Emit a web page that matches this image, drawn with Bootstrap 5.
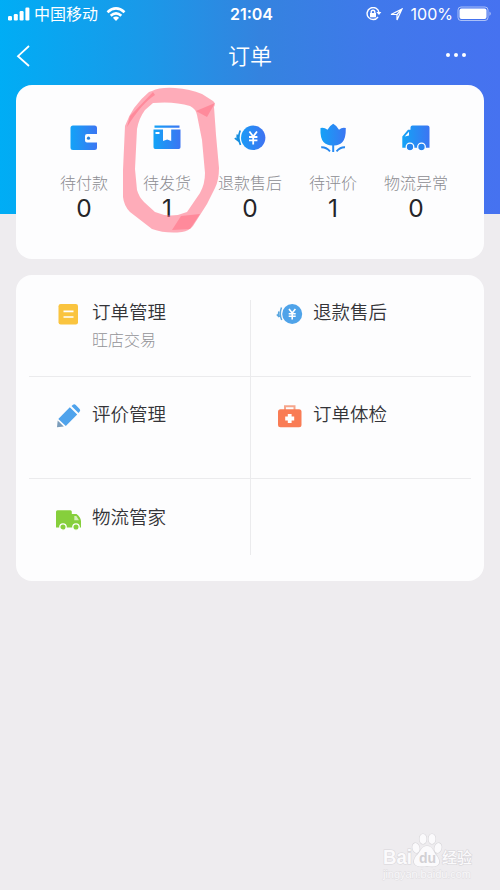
<!DOCTYPE html>
<html lang="zh-CN">
<head>
<meta charset="utf-8">
<meta name="viewport" content="width=device-width, initial-scale=1">
<title>订单</title>
<link rel="stylesheet" href="https://cdn.jsdelivr.net/npm/bootstrap@5.3.0/dist/css/bootstrap.min.css">
<style>
body{font-family:"Noto Sans CJK SC",sans-serif;background:#eeecef;height:890px;overflow:hidden;color:#343438}
.hero{height:214px;background:linear-gradient(90deg,#00adf5 0%,#1b98e8 30%,#3483df 52%,#4078eb 76%,#4672f0 100%);margin-bottom:-129px}
.status{height:28px;font-family:"Inter","Noto Sans CJK SC",sans-serif;font-size:16px;line-height:28px}
.status>*,.titlebar>*{flex:0 0 33.3333%}
.clock{font-weight:600;font-size:16px;padding-left:3px}
.carrier{font-size:16px;line-height:28px}
.titlebar{height:57px}
.titlebar h1{font-size:22px;line-height:52px;height:57px;font-weight:350}
.panel{margin:0 16px;border-radius:16px;background:#fdfdfe}
.summary{height:174px;padding:37px 26.5px 0}
.summary .tile{width:20%}
.summary svg{width:32px;height:32px}
.tile-label{font-size:16px;line-height:22px;margin-top:17px;color:#8c8c91;font-weight:300;white-space:nowrap}
.tile-count{font-family:"Inter",sans-serif;font-size:24.5px;line-height:31px;color:#252528}
.marker{left:0;top:0;width:500px;height:270px;pointer-events:none}
.menu{margin-top:16px;height:306px;padding:25px 13px}
.entry{height:101px;padding:25px 0 0 26px}
.menu>.row:first-child .entry{height:76px;padding-top:0}
.menu>.row:last-child .entry{height:76px;padding-top:26px}
.menu .row{border-color:#ebebed!important}
.entry:last-child{border-left:1px solid #ebebed}
.entry svg{width:28px;height:28px;flex:none;margin-right:9px}
.entry:last-child svg{margin-left:-2px;margin-right:10px}
.entry-title{font-size:18.5px;line-height:26px;font-weight:350;margin-top:-2px}
.entry-note{font-size:16px;line-height:24px;color:#939397;font-weight:300;margin-top:3px}
.brand{right:24px;bottom:6px;width:96px;height:52px}
</style>
<script src="https://cdn.jsdelivr.net/npm/bootstrap@5.3.0/dist/js/bootstrap.bundle.min.js"></script>
</head>
<body class="position-relative">
<header class="hero text-white">
  <div class="status d-flex">
    <div class="d-flex align-items-center ps-2">
      <svg width="22" height="14" viewBox="0 0 22 14" fill="#fff"><rect y="9" width="4" height="4.5" rx="1.2"/><rect x="5.8" y="7" width="4" height="6.500" rx="1.2"/><rect x="11.600" y="4" width="4" height="9.500" rx="1.2"/><rect x="17.400" y="0.500" width="4" height="13" rx="1.2"/></svg>
      <span class="carrier ms-1">中国移动</span>
      <svg class="ms-2" width="20" height="15" viewBox="0 0 20 15" fill="none" stroke="#fff" stroke-width="2.700"><path d="M1.500 5.200Q10-2.300 18.500 5.200M4.700 8.700Q10 4.200 15.300 8.700"/><path d="M6.900 10.800Q10 8.200 13.100 10.800L10 14Z" fill="#fff" stroke="none"/></svg>
    </div>
    <div class="clock text-center">21:04</div>
    <div class="d-flex align-items-center justify-content-end pe-2">
      <svg width="16" height="14" viewBox="0 0 16 14" fill="none" stroke="#fff" stroke-width="1.400"><path d="M12 10A6 6 0 1 1 13 5.500"/><path d="M10.300 5h5L13 8Z" fill="#fff" stroke="none"/><rect x="4" y="6" width="6" height="4.300" fill="#fff" stroke="none"/><path d="M5.200 6V5a1.800 1.800 0 0 1 3.600 0v1"/></svg>
      <svg class="ms-2" width="13" height="13" viewBox="0 0 13 13" fill="none" stroke="#fff" stroke-width="1.200"><path d="M1 6.500 12 1 7 12V6.500ZM7 6.500 12 1"/></svg>
      <span class="ms-2">100%</span>
      <svg class="ms-1" width="35" height="16" viewBox="0 0 35 16"><rect x="1" y="1" width="30" height="13.500" rx="3" fill="none" stroke="#fff" stroke-opacity=".55"/><rect x="2.500" y="2.500" width="27" height="10.500" rx="2" fill="#fff"/><path d="M32.500 5.500Q35 7.700 32.500 10Z" fill="#fff" opacity=".6"/></svg>
    </div>
  </div>
  <nav class="titlebar d-flex align-items-center">
    <div class="d-flex ps-3"><svg width="16" height="24" viewBox="0 0 16 24" fill="none" stroke="#fff" stroke-width="1.800"><path d="M13 1 2 11.200 13 21"/></svg></div>
    <h1 class="m-0 text-center">订单</h1>
    <div class="d-flex justify-content-end pe-4 pb-1"><svg class="me-2" width="24" height="6" viewBox="0 0 24 6" fill="#fff"><circle cx="4" cy="3" r="2"/><circle cx="12" cy="3" r="2"/><circle cx="20" cy="3" r="2"/></svg></div>
  </nav>
</header>

<main>
<section class="panel summary d-flex text-center">
  <div class="tile"><svg viewBox="0 0 32 32"><defs><linearGradient id="blue"  gradientUnits="userSpaceOnUse" x1="2" y1="16" x2="30" y2="16"><stop stop-color="#12a4f7"/><stop offset="1" stop-color="#3d74f2"/></linearGradient></defs><path d="M5 3.500H26.500a2.500 2.500 0 0 1 2.500 2.500V12H19a2 2 0 0 0-2 2v4.500a2 2 0 0 0 2 2H29V25.500a2.500 2.500 0 0 1-2.500 2.500H5a2.500 2.500 0 0 1-2.500-2.500V6A2.500 2.500 0 0 1 5 3.500Z" fill="url(#blue)"/><circle cx="20.500" cy="16.200" r="1.600" fill="#287ed9"/></svg><div class="tile-label">待付款</div><div class="tile-count">0</div></div>
  <div class="tile"><svg viewBox="0 0 32 32"><path d="M3.500 3.500H28.500V5.700H3.500ZM2.500 7.600H12V19L16.200 17.500 20.200 19V7.600H29.500V25.300a1.700 1.700 0 0 1-1.700 1.700H4.200a1.700 1.700 0 0 1-1.700-1.700Z" fill="url(#blue)"/><path d="M4.500 10H8.500V12H4.500Z" fill="#fff"/></svg><div class="tile-label">待发货</div><div class="tile-count">1</div></div>
  <div class="tile"><svg viewBox="0 0 32 32"><circle cx="19.200" cy="15.800" r="12.200" fill="url(#blue)"/><path d="M6.200 8.500Q3.300 15.500 6.500 23M3.400 12.500Q2.700 15 3.800 18.500L.8 16.200" fill="none" stroke="#178fe0" stroke-width="1.700"/><path d="M15.400 9.500 19.200 14.500 23 9.500M15 15h8.400M15 18.300h8.400M19.200 14v8.500" fill="none" stroke="#fff" stroke-width="1.800"/></svg><div class="tile-label">退款售后</div><div class="tile-count">0</div></div>
  <div class="tile"><svg viewBox="0 0 32 32"><path d="M3.500 6Q7 5 10.500 7.700 12.300 4 16.200 1.800 20.200 4 22 7.700 25 5 28.800 6 29 16 25.500 20 22.500 23.300 17.200 23.400V30H15.200V23.400Q9.500 23.300 6.500 20 3 16 3.500 6Z" fill="url(#blue)"/><path d="M4.200 25.300Q9 25 13 29.300M28 25.300Q23.500 25 19.500 29.300" fill="none" stroke="#2787ee" stroke-width="1.900"/></svg><div class="tile-label">待评价</div><div class="tile-count">1</div></div>
  <div class="tile"><svg viewBox="0 0 32 32"><path d="M12.500 3.500H27.500a2 2 0 0 1 2 2V25.700H2.300V14.500L8 7.800H10.500V5.500a2 2 0 0 1 2-2Z" fill="url(#blue)"/><path d="M4.700 14.500 9 9.700V13.500Z" fill="#fff"/><g fill="#2684ee" stroke="#fff" stroke-width="1.300"><circle cx="10" cy="25" r="3.800"/><circle cx="21.500" cy="25" r="3.800"/></g></svg><div class="tile-label">物流异常</div><div class="tile-count">0</div></div>
</section>

<section class="panel menu">
  <div class="row g-0 border-bottom">
    <div class="col-6 entry d-flex"><svg viewBox="0 0 28 28"><rect x="3.500" y="4" width="19.500" height="20.500" rx="2.200" fill="#fac43f"/><path d="M8.500 11.300h10M8.500 17h10" stroke="#fff" stroke-width="1.700"/></svg><div><div class="entry-title">订单管理</div><div class="entry-note">旺店交易</div></div></div>
    <div class="col-6 entry d-flex"><svg viewBox="0 0 28 28"><circle cx="17.200" cy="14" r="10" fill="#4fa3e9"/><path d="M6.500 7.500Q4 14 6.700 20M3.800 11.500Q3 14 4.200 17L1.800 14.500" fill="none" stroke="#59a6df" stroke-width="1.500"/><path d="M14 9 17.200 13 20.400 9M13.700 13.700h7M13.700 16.300h7M17.200 13v6.500" fill="none" stroke="#fff" stroke-width="1.600"/></svg><div class="entry-title">退款售后</div></div>
  </div>
  <div class="row g-0 border-bottom">
    <div class="col-6 entry d-flex"><svg viewBox="0 0 28 28"><path d="M14.800 5.300 22.200 12.500 10.800 24 3.300 17ZM16.500 3.900 18 2.700Q19.500 1.800 20.800 3.100L24.600 6.900Q25.800 8.300 24.700 9.600L23.500 11Z" fill="#4fa3ec"/><path d="M2.700 18.500 8.800 24.500 2 25.300Z" fill="#7a9cba"/></svg><div class="entry-title">评价管理</div></div>
    <div class="col-6 entry d-flex"><svg viewBox="0 0 28 28"><path d="M10 8V4.300H19.500V8" fill="none" stroke="#f6a58b" stroke-width="2"/><rect x="3" y="7.300" width="23.500" height="18" rx="2.500" fill="#f97c55"/><path d="M14.700 12v9M10.200 16.500h9" stroke="#fff" stroke-width="3.800"/></svg><div class="entry-title">订单体检</div></div>
  </div>
  <div class="row g-0">
    <div class="col-6 entry d-flex"><svg viewBox="0 0 28 28"><path d="M2.500 5.300H15.300a1.500 1.500 0 0 1 1.500 1.500V9H21.500Q25.500 12 26 16V22.500H1V6.800a1.500 1.500 0 0 1 1.500-1.500Z" fill="#86cf3c"/><path d="M19.300 11H21.300L24 15.300H19.300Z" fill="#d5efb9"/><g fill="#86cf3c" stroke="#fff" stroke-width="1.300"><circle cx="8" cy="22" r="3.200"/><circle cx="21" cy="22" r="3.200"/></g></svg><div class="entry-title">物流管家</div></div>
    <div class="col-6 entry"></div>
  </div>
</section>
</main>

<svg class="marker position-absolute" viewBox="0 0 500 270"><g fill="#ff6f84"><path fill-opacity=".57" fill-rule="evenodd" d="M152 91Q160 87 175 88 190 89 202 94L213 101Q216 103 214 107L216 135 219 168Q219 180 215 188L207 204 193 226Q189 231 182 232 166 234 152 229L130 212Q124 206 123 197L123 170 125 126Q132 106 149 92ZM153 103 145 110Q139 118 137 129L135 169 137 190Q139 197 144 202L155 212Q171 219 187 212L200 193Q205 184 205 173L202 140 197 115Q196 109 190 106 174 101 153 103Z"/><path fill-opacity=".55" d="M153 92 130 116 127 127Q142 103 155 95ZM196 111 215 103 207 117ZM172 230 181 216 200 214 190 229Z"/></g></svg>

<svg class="brand position-absolute" viewBox="0 0 96 52" font-family="Liberation Sans,Noto Sans CJK SC,sans-serif"><g fill="#fbfafc" stroke="#d8d6da" stroke-width="1.200" paint-order="stroke"><text x="3" y="32" font-size="21" font-weight="700" textLength="29" lengthAdjust="spacingAndGlyphs">Bai</text><ellipse cx="36" cy="16" rx="3.500" ry="5" transform="rotate(-15 36 16)"/><ellipse cx="43" cy="7" rx="3.500" ry="5"/><ellipse cx="52" cy="7" rx="3.500" ry="5"/><ellipse cx="58" cy="16" rx="3.500" ry="5" transform="rotate(15 58 16)"/><path d="M47 14C41 14 41 20 36 24 30 33 38 36 47 34 56 36 63 33 57 24 53 20 53 14 47 14Z"/><text x="62" y="31" font-size="15" font-weight="500">经验</text></g><text x="39" y="31" font-size="14" font-weight="700" fill="#d2d0d4">du</text><text x="3" y="46" font-size="11" fill="#f9f8fa" stroke="#dedce0" stroke-width=".8" paint-order="stroke" textLength="88">jingyan.baidu.com</text></svg>
</body>
</html>
